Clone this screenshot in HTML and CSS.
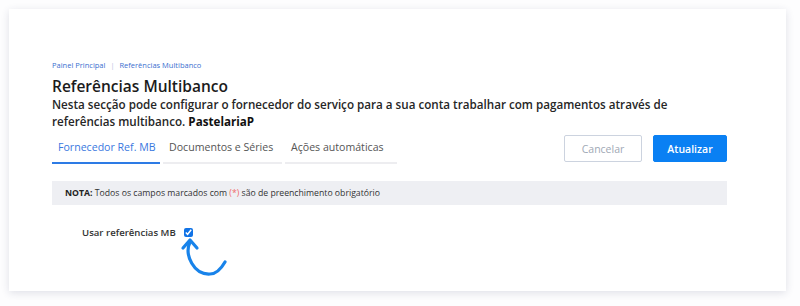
FILE: index.html
```html
<!DOCTYPE html>
<html lang="pt">
<head>
  <meta charset="UTF-8" />
  <meta name="viewport" content="width=device-width, initial-scale=1.0" />
  <title>Referências Multibanco</title>
  <link rel="stylesheet" href="styles.css">
</head>
<body>
  <div class="card">
    <div class="breadcrumb">
      <a href="#">Painel Principal</a>
      <span class="sep">|</span>
      <a href="#">Referências Multibanco</a>
    </div>
    <h1>Referências Multibanco</h1>
    <p class="intro">Nesta secção pode configurar o fornecedor do serviço para a sua conta trabalhar com pagamentos através de referências multibanco. <b>PastelariaP</b></p>

    <div class="toolbar">
      <ul class="tabs">
        <li class="active tab-ref">Fornecedor Ref. MB</li>
        <li class="tab-docs">Documentos e Séries</li>
        <li class="tab-auto">Ações automáticas</li>
      </ul>
      <div class="actions">
        <button class="btn btn-outline">Cancelar</button>
        <button class="btn btn-primary">Atualizar</button>
      </div>
    </div>

    <div class="note"><b>NOTA:</b> Todos os campos marcados com <span class="req">(*)</span> são de preenchimento obrigatório</div>

    <div class="field">
      <label for="useMb">Usar referências MB</label>
      <span class="check-wrap">
        <input type="checkbox" id="useMb" checked />
        <svg class="hint-arrow" width="54" height="44" viewBox="0 0 54 44">
          <path d="M14 7 C 8 20, 18 40, 34 39 C 40 39, 45 34, 49 27" fill="none" stroke="#1883ea" stroke-width="3.2" stroke-linecap="round"/>
          <path d="M7 13 L14 5 L21 13" fill="none" stroke="#1883ea" stroke-width="3.2" stroke-linecap="round" stroke-linejoin="round"/>
        </svg>
      </span>
    </div>
  </div>
</body>
</html>
```

FILE: styles.css
```css
body {
  margin: 0;
  padding: 9px;
  background: #fdfdfe;
  font-family: 'Open Sans', sans-serif;
  color: #222;
}
.card {
  background: #fff;
  width: 777px;
  height: 282px;
  box-sizing: border-box;
  padding: 50px 59px 0 43px;
  box-shadow: 0 2px 8px rgba(40, 50, 90, 0.14);
}
.breadcrumb {
  font-size: 7.5px;
  line-height: 12px;
  color: #3a6fcf;
}
.breadcrumb a {
  color: #3a6fcf;
  text-decoration: none;
}
.breadcrumb .sep {
  color: #b8c4e0;
  margin: 0 3px;
}
h1 {
  margin: 5px 0 0;
  font-size: 15.5px;
  font-weight: 600;
  line-height: 20px;
  color: #1b1b1b;
}
.intro {
  margin: 0;
  max-width: 620px;
  font-size: 11.65px;
  font-weight: 600;
  line-height: 17px;
  color: #262626;
}
.intro b {
  font-weight: 700;
  color: #111;
}
.toolbar {
  display: flex;
  justify-content: space-between;
  align-items: flex-start;
  margin-top: 5px;
}
.tabs {
  list-style: none;
  margin: 0;
  padding: 0;
  display: flex;
  gap: 3px;
  margin-top: 2px;
}
.tabs li {
  box-sizing: border-box;
  white-space: nowrap;
  font-size: 10.6px;
  color: #555;
  padding: 0 0 5px 6px;
  line-height: 20px;
  border-bottom: 2px solid #ededf0;
}
.tabs .tab-ref { width: 108px; }
.tabs .tab-docs { width: 119px; }
.tabs .tab-auto { width: 112px; }
.tabs li.active {
  color: #3a78e0;
  border-bottom-color: #2d7be5;
}
.actions {
  display: flex;
  gap: 11px;
}
.btn {
  font-family: 'Open Sans', sans-serif;
  font-size: 10.5px;
  height: 27px;
  border-radius: 2px;
  cursor: pointer;
}
.btn-outline {
  width: 78px;
  background: #fff;
  border: 1px solid #ccd3df;
  color: #a0a8b5;
}
.btn-primary {
  width: 74px;
  background: #0a80f3;
  border: 1px solid #0a80f3;
  color: #fff;
  font-weight: 600;
}
.note {
  margin-top: 17px;
  background: #eeeff3;
  height: 24px;
  line-height: 24px;
  padding-left: 13px;
  font-size: 8.7px;
  color: #333;
}
.note b {
  font-weight: 700;
  color: #222;
}
.req {
  color: #f06a6a;
}
.field {
  display: flex;
  align-items: center;
  margin-top: 21px;
  padding-left: 30px;
}
.field label {
  font-size: 9.6px;
  font-weight: 600;
  color: #333;
  margin-right: 8px;
}
.check-wrap {
  position: relative;
  display: inline-flex;
}
.check-wrap input {
  margin: 0;
  width: 9px;
  height: 9px;
  accent-color: #1173e6;
}
.hint-arrow {
  position: absolute;
  left: -8px;
  top: 7px;
}
```
